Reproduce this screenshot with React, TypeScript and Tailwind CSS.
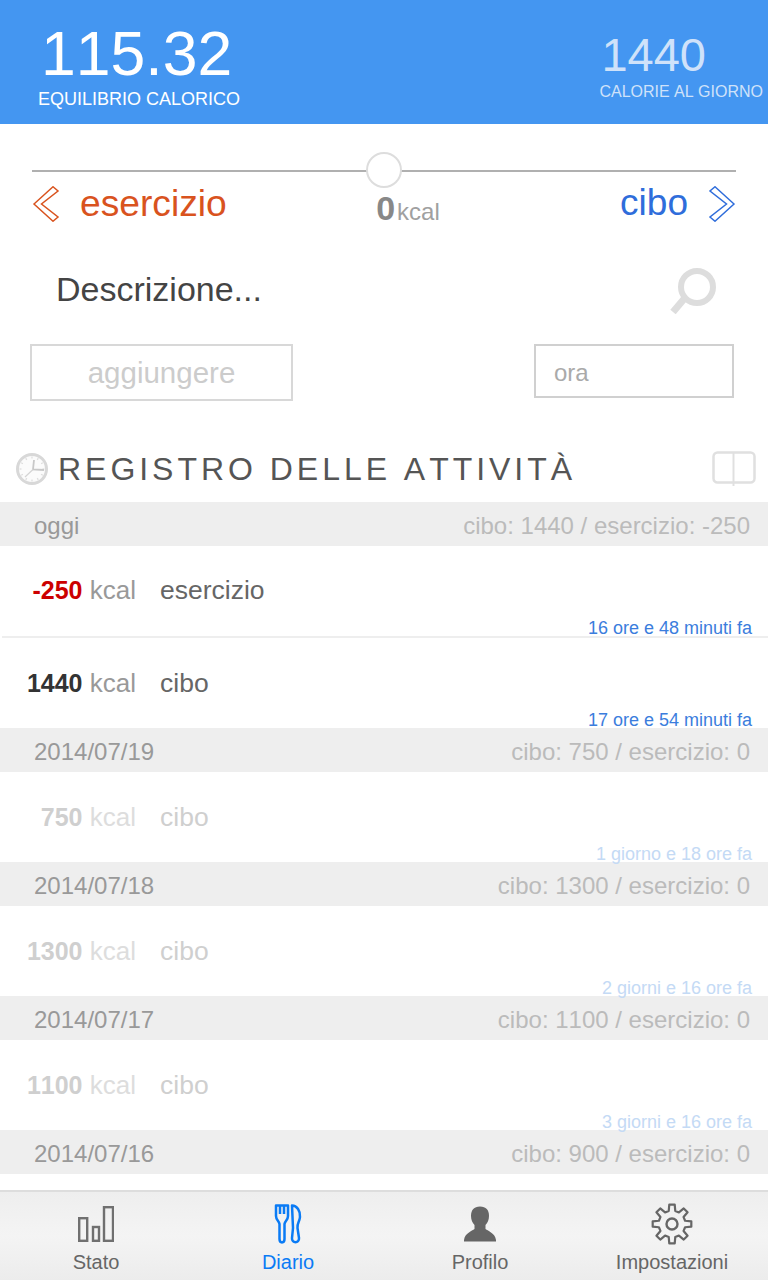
import React from 'react';

const font = { fontFamily: '"Liberation Sans", Arial, sans-serif' };

type Entry = { amount: string; label: string; ago: string; amountClass: string; border?: boolean };
type Day = { title: string; summary: string; entries: Entry[]; faded?: boolean };

const days: Day[] = [
    {
        title: 'oggi',
        summary: 'cibo: 1440 / esercizio: -250',
        entries: [
            { amount: '-250', label: 'esercizio', ago: '16 ore e 48 minuti fa', amountClass: 'text-[#cc0000]', border: true },
            { amount: '1440', label: 'cibo', ago: '17 ore e 54 minuti fa', amountClass: 'text-[#333333]' },
        ],
    },
    {
        title: '2014/07/19',
        summary: 'cibo: 750 / esercizio: 0',
        faded: true,
        entries: [{ amount: '750', label: 'cibo', ago: '1 giorno e 18 ore fa', amountClass: 'text-[#cfcfcf]' }],
    },
    {
        title: '2014/07/18',
        summary: 'cibo: 1300 / esercizio: 0',
        faded: true,
        entries: [{ amount: '1300', label: 'cibo', ago: '2 giorni e 16 ore fa', amountClass: 'text-[#cfcfcf]' }],
    },
    {
        title: '2014/07/17',
        summary: 'cibo: 1100 / esercizio: 0',
        faded: true,
        entries: [{ amount: '1100', label: 'cibo', ago: '3 giorni e 16 ore fa', amountClass: 'text-[#cfcfcf]' }],
    },
    { title: '2014/07/16', summary: 'cibo: 900 / esercizio: 0', entries: [] },
];

const polar = (cx: number, cy: number, r: number, deg: number) => {
    const a = ((deg - 90) * Math.PI) / 180;
    return `${(cx + r * Math.cos(a)).toFixed(2)} ${(cy + r * Math.sin(a)).toFixed(2)}`;
};

// eight teeth, one pointing straight up
const gearPath = () => {
    const parts: string[] = [];
    for (let i = 0; i < 8; i++) {
        const c = i * 45;
        parts.push(polar(21, 21, 13.5, c - 14), polar(21, 21, 19.5, c - 8), polar(21, 21, 19.5, c + 8), polar(21, 21, 13.5, c + 14));
    }
    return 'M' + parts.join(' L') + ' Z';
};

const clockTicks = Array.from({ length: 12 }, (_, i) => i * 30);

const Chevrons = ({ dir, color }: { dir: 'left' | 'right'; color: string }) => (
    <svg width="28" height="36" viewBox="0 0 28 36" fill="none" className={`mt-[1px] ${dir === 'right' ? '-scale-x-100' : ''}`}>
        <path d="M2 18 L21 0.8 L26 5 L9.500 18 L26 31 L21 35.200 Z" stroke={color} strokeWidth="1.500" />
    </svg>
);

const SearchIcon = () => (
    <svg width="48" height="50" viewBox="0 0 48 50" fill="none">
        <circle cx="27" cy="23" r="16" stroke="#dddddd" strokeWidth="6" />
        <path d="M14 35 L3 48" stroke="#dddddd" strokeWidth="7" />
    </svg>
);

const ClockIcon = () => (
    <svg width="34" height="34" viewBox="0 0 34 34" fill="none">
        <circle cx="17" cy="17" r="14.500" fill="#fbfbfb" stroke="#d8d8d8" strokeWidth="3" />
        {clockTicks.map((d) => (
            <path key={d} d={`M${polar(17, 17, 12.5, d)} L${polar(17, 17, 10.5, d)}`} stroke="#dddddd" strokeWidth="1.200" />
        ))}
        <path d="M19 8 L18 17.500 L29 18" stroke="#c8c8c8" strokeWidth="1.800" />
        <path d="M18 17.500 L10 25" stroke="#d4d4d4" strokeWidth="1.200" />
    </svg>
);

const BookIcon = () => (
    <svg width="44" height="36" viewBox="0 0 44 36" fill="none">
        <rect x="1.500" y="1.500" width="41" height="30" rx="4" stroke="#e0e0e0" strokeWidth="2.500" />
        <path d="M21.500 1.500 V35" stroke="#e0e0e0" strokeWidth="2" />
    </svg>
);

const StatsIcon = () => (
    <svg width="36" height="36" viewBox="0 0 36 36" fill="none" stroke="#707070" strokeWidth="2.400">
        <rect x="1.200" y="12.200" width="8" height="22.600" />
        <rect x="15" y="21" width="6" height="13.800" />
        <rect x="26" y="1.200" width="9" height="33.600" />
    </svg>
);

const ForkKnifeIcon = () => (
    <svg width="28" height="40" viewBox="0 0 28 40" fill="none" stroke="#0a7bf5" strokeWidth="2.500" strokeLinejoin="round">
        <path d="M2 1.500 H14 V12 C14 16 11 17 10.500 20 V35 C10.500 39.500 5.500 39.500 5.500 35 V20 C5 17 2 16 2 12 Z" />
        <path d="M6 1.500 V10 M10 1.500 V10" />
        <path d="M18 1.500 C23 1.500 26.500 7 26 13 C25.500 18 23 19 23.500 24 L25 34 C25.500 39.500 17.500 39.500 18 34 L19 24 Z" />
    </svg>
);

const UserIcon = () => (
    <svg width="32" height="36" viewBox="0 0 32 36" fill="#666666">
        <path d="M16 0.500 C22 0.500 25 4 25 10 C25 14 23.500 17 21.500 19 L21.500 23 C24 25 31 27 32 34 L32 35.500 H0 L0 34 C1 27 8 25 10.500 23 L10.500 19 C8.500 17 7 14 7 10 C7 4 10 0.500 16 0.500 Z" />
    </svg>
);

const GearIcon = () => (
    <svg width="42" height="42" viewBox="0 0 42 42" fill="none" stroke="#666666" strokeWidth="2.200" strokeLinejoin="round">
        <path d={gearPath()} />
        <circle cx="21" cy="21" r="5.500" strokeWidth="2.400" />
    </svg>
);

const DayGroup = ({ day }: { day: Day }) => (
    <section>
        <div className="h-11 bg-[#eeeeee] flex items-center justify-between pl-[34px] pr-[18px] pt-1 text-2xl text-[#999999]">
            <span>{day.title}</span>
            <span className="text-[#bbbbbb]">{day.summary}</span>
        </div>
        {day.entries.map((e) => (
            <div key={e.ago} className={`relative flex items-center pt-[2px] ${e.border ? 'h-[92px] border-b-2 border-[#eeeeee] ml-[2px] pb-[2px]' : 'h-[90px]'}`}>
                <div className={`${e.border ? 'w-[134px]' : 'w-[136px]'} -mt-[2px] text-right text-[26px] shrink-0 ${day.faded ? 'text-[#dddddd]' : 'text-[#999999]'}`}>
                    <span className={`font-bold text-[25px] ${e.amountClass}`}>{e.amount}</span> kcal
                </div>
                <div className={`ml-6 text-[26.500px] ${day.faded ? 'text-[#cfcfcf]' : 'text-[#666666]'}`}>{e.label}</div>
                <div className={`absolute right-4 -bottom-[1px] text-lg leading-[18px] ${day.faded ? 'text-[#c4daf5]' : 'text-[#3b7ddd]'}`}>{e.ago}</div>
            </div>
        ))}
    </section>
);

const NavItem = ({ icon, label, active }: { icon: React.ReactNode; label: string; active?: boolean }) => (
    <div className="flex flex-col items-center">
        <div className="h-[48px] flex items-center justify-center">{icon}</div>
        <div className={`text-xl leading-6 mt-[2px] ${active ? 'text-[#0a7bf5]' : 'text-[#666666]'}`}>{label}</div>
    </div>
);

export default function App() {
    return (
        <div style={font} className="h-[1280px] w-[768px] flex flex-col overflow-hidden bg-white [font-kerning:none]">
            <header className="h-[124px] shrink-0 bg-[#4496f1] flex justify-between">
                <div className="pl-[38px] pt-[20px]">
                    <div className="text-[62.500px] leading-[66px] text-white pl-[3px]">115.32</div>
                    <div className="text-lg leading-[22px] text-white mt-[2px]">EQUILIBRIO CALORICO</div>
                </div>
                <div className="pr-[5px] pt-[28px] text-[#cfe2fa]">
                    <div className="text-[47px] leading-[54px] pl-[2px]">1440</div>
                    <div className="text-base leading-5">CALORIE AL GIORNO</div>
                </div>
            </header>

            <main className="flex-1 min-h-0 overflow-hidden">
                <div className="relative mx-8 mt-[46px] h-[2px] bg-[#b0b0b0]">
                    <div className="absolute left-[334px] -top-[18px] w-9 h-9 rounded-full bg-white border-2 border-[#dddddd]" />
                </div>

                <div className="flex justify-between items-start px-8 mt-[11px] h-[60px]">
                    <div className="flex items-center gap-[20px] w-[280px]">
                        <Chevrons dir="left" color="#d9531e" />
                        <span className="text-[37.200px] leading-10 text-[#d9531e]">esercizio</span>
                    </div>
                    <div className="mt-[5px] text-[#a0a0a0] text-2xl leading-10 ml-[48px]">
                        <span className="text-[34px] font-bold text-[#888888]">0</span>
                        <span className="ml-[2px]">kcal</span>
                    </div>
                    <div className="flex items-center justify-end gap-[20px] w-[280px]">
                        <span className="text-[37px] leading-10 text-[#2f6ddb]">cibo</span>
                        <Chevrons dir="right" color="#2f6ddb" />
                    </div>
                </div>

                <div className="flex items-center justify-between pl-[56px] pr-[50px] mt-[16px] h-[60px]">
                    <span className="text-[34px] text-[#444444]">Descrizione...</span>
                    <SearchIcon />
                </div>

                <div className="flex justify-between items-start pl-[30px] pr-[34px] mt-[25px]">
                    <div className="w-[263px] h-[57px] border-2 border-[#d8d8d8] flex items-center justify-center pt-[2px] text-[29.500px] text-[#cccccc]">aggiungere</div>
                    <div className="w-[200px] h-[54px] border-2 border-[#d0d0d0] flex items-center pl-[18px] pt-[3px] text-2xl text-[#aaaaaa]">ora</div>
                </div>

                <div className="flex items-center justify-between pl-[15px] pr-[12px] mt-[35px] h-[66px]">
                    <div className="flex items-center gap-[9px]">
                        <ClockIcon />
                        <span className="text-[32px] tracking-[3.970px] text-[#555555]">REGISTRO DELLE ATTIVITÀ</span>
                    </div>
                    <BookIcon />
                </div>

                {days.map((d) => (
                    <DayGroup key={d.title} day={d} />
                ))}
            </main>

            <nav className="h-[90px] shrink-0 border-t-2 border-[#dddddd] bg-gradient-to-b from-[#eeeeee] via-[#f4f4f4] to-[#ececec] grid grid-cols-4 pt-[8px]">
                <NavItem icon={<StatsIcon />} label="Stato" />
                <NavItem icon={<ForkKnifeIcon />} label="Diario" active />
                <NavItem icon={<UserIcon />} label="Profilo" />
                <NavItem icon={<GearIcon />} label="Impostazioni" />
            </nav>
        </div>
    );
}
